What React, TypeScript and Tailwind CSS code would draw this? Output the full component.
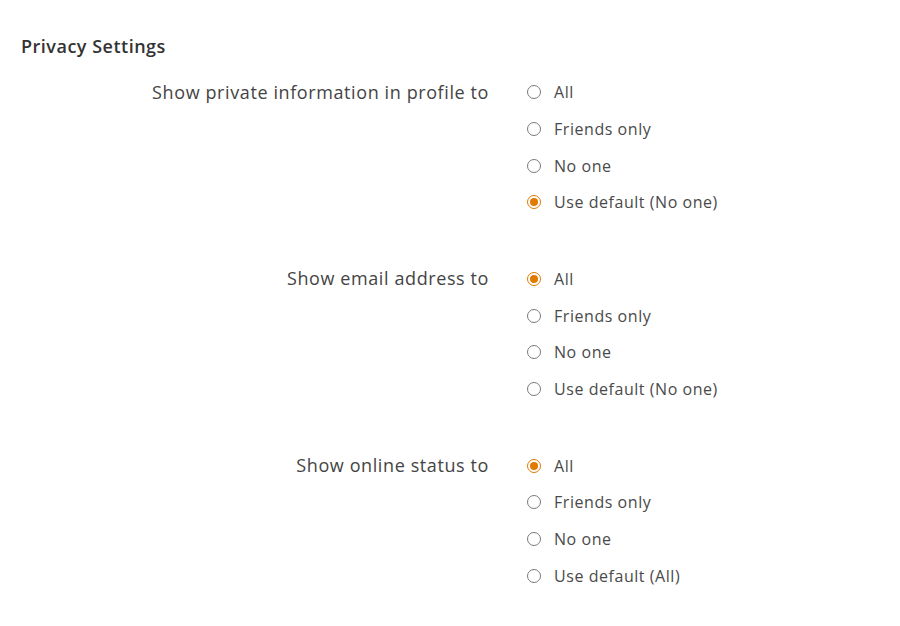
import React from "react";

type Group = { label: string; options: string[]; selected: number };

const groups: Group[] = [
  {
    label: "Show private information in profile to",
    options: ["All", "Friends only", "No one", "Use default (No one)"],
    selected: 3,
  },
  {
    label: "Show email address to",
    options: ["All", "Friends only", "No one", "Use default (No one)"],
    selected: 0,
  },
  {
    label: "Show online status to",
    options: ["All", "Friends only", "No one", "Use default (All)"],
    selected: 0,
  },
];

function Radio({ checked }: { checked: boolean }) {
  return checked ? (
    <span className="flex h-[14px] w-[14px] items-center justify-center rounded-full border-[1.5px] border-[#e07a00] bg-white">
      <span className="h-[8px] w-[8px] rounded-full bg-[#e07a00]" />
    </span>
  ) : (
    <span className="h-[14px] w-[14px] rounded-full border border-[#7a7a7a] bg-white" />
  );
}

export default function App() {
  return (
    <div
      className="min-h-[626px] w-[900px] bg-white pl-[21px] pt-[34px] text-[#4a4a4a]"
      style={{ fontFamily: "'Open Sans', sans-serif" }}
    >
      <h2 className="text-[18px] font-semibold leading-[24px] tracking-[0.5px] text-[#333]">Privacy Settings</h2>
      <div className="mt-[16px] flex flex-col gap-[40px]">
        {groups.map((g) => (
          <div key={g.label} className="flex">
            <div className="flex h-[36.67px] w-[468px] items-center justify-end text-[18px] tracking-[0.6px] text-[#444]">
              {g.label}
            </div>
            <div className="ml-[38px] flex flex-col">
              {g.options.map((o, i) => (
                <label key={o} className="flex h-[36.67px] items-center">
                  <Radio checked={i === g.selected} />
                  <span className="ml-[13px] text-[16px] tracking-[0.55px]">{o}</span>
                </label>
              ))}
            </div>
          </div>
        ))}
      </div>
    </div>
  );
}
